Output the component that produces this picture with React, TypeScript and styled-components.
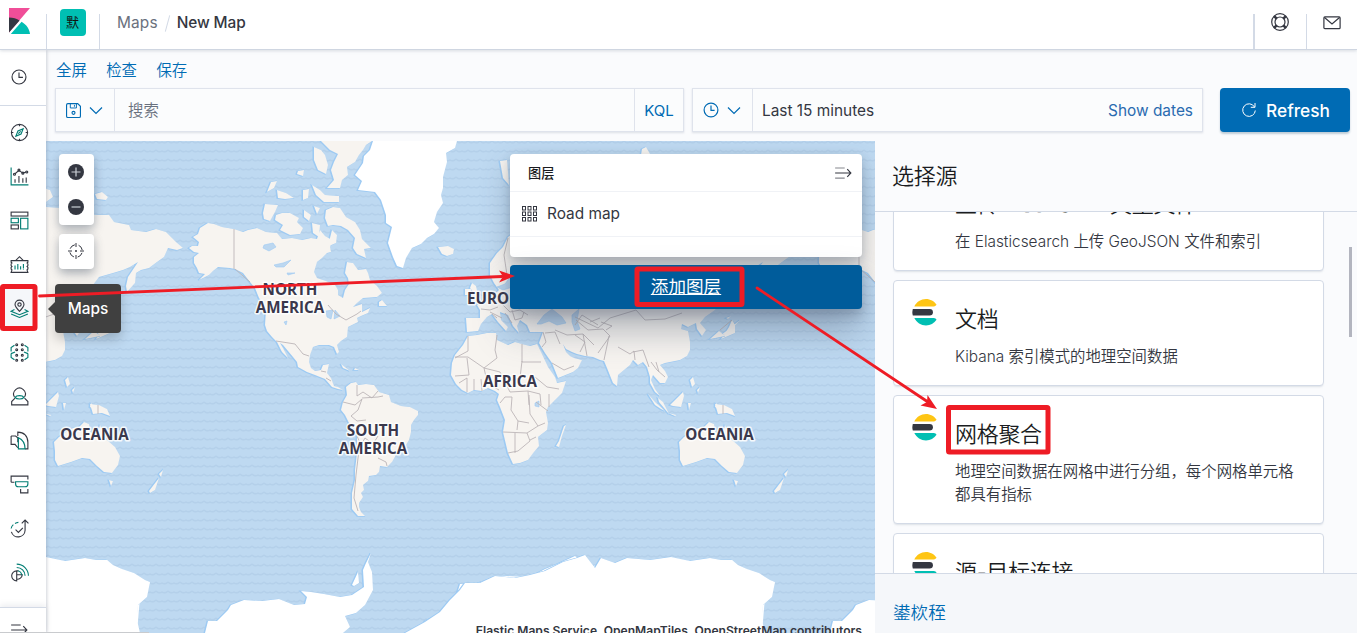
import React from "react";
import styled, { createGlobalStyle, css } from "styled-components";

const INK = "#343741";
const TEAL = "#017d73";
const BLUE = "#006bb4";
const LINE = "#d3dae6";
const RED = "#ee1c25";

const GlobalStyle = createGlobalStyle`
  *, *::before, *::after { box-sizing: border-box; }
  html, body { margin: 0; padding: 0; overflow: hidden; }
  body {
    font-family: Inter, "Noto Sans CJK SC", sans-serif;
    font-size: 15.4px;
    color: ${INK};
    background: #fafbfd;
  }
  button { font: inherit; border: 0; background: none; padding: 0; margin: 0; }
  p, h2, h3, ul { margin: 0; padding: 0; }
`;

const Page = styled.div`
  position: relative;
  width: 1357px;
  height: 633px;
  display: flex;
  flex-direction: column;
  overflow: hidden;
`;

/* ---------- header ---------- */

const Header = styled.header`
  position: relative;
  z-index: 3;
  flex: none;
  height: 50px;
  display: flex;
  align-items: stretch;
  background: #fff;
  border-bottom: 1px solid #cfd6e1;
  box-shadow: 0 1px 3px rgba(152, 162, 179, 0.35);
`;

const HeaderCell = styled.div<{ $w: number; $line?: boolean; $thick?: boolean }>`
  width: ${(p) => p.$w}px;
  display: flex;
  justify-content: center;
  padding-top: 8px;
  ${(p) =>
    p.$line &&
    css`
      background: linear-gradient(${LINE}, ${LINE}) 0 14px / ${p.$thick ? 2 : 1}px 100% no-repeat;
    `}
`;

const SpaceAvatar = styled.span`
  width: 26px;
  height: 27px;
  margin-top: 1px;
  border-radius: 4px;
  background: #00bfb3;
  color: #111;
  font-size: 13px;
  line-height: 26px;
  text-align: center;
`;

const Breadcrumbs = styled.nav`
  flex: 1;
  display: flex;
  align-items: flex-start;
  padding: 12px 0 0 18px;
  line-height: 22px;
  background: linear-gradient(${LINE}, ${LINE}) 0 14px / 1px 100% no-repeat;
`;

const Crumb = styled.span<{ $current?: boolean }>`
  color: ${(p) => (p.$current ? INK : "#6a717d")};
  font-weight: ${(p) => (p.$current ? 500 : 400)};
  letter-spacing: ${(p) => (p.$current ? -0.1 : 0.15)}px;
`;

const CrumbSlash = styled.span`
  width: 1px;
  height: 17px;
  margin: 3px 9px 0 9px;
  background: ${LINE};
  transform: rotate(15deg);
`;

/* ---------- frame ---------- */

const Body = styled.div`
  flex: 1;
  display: flex;
  min-height: 0;
`;

const SideNav = styled.nav`
  position: relative;
  z-index: 2;
  width: 46px;
  flex: none;
  display: flex;
  flex-direction: column;
  background: #fff;
  box-shadow: 1px 0 3px rgba(120, 130, 150, 0.35);
`;

const NavItem = styled.div<{ $active?: boolean }>`
  height: 44px;
  padding-left: 10px;
  display: flex;
  align-items: center;
  background: ${(p) => (p.$active ? "linear-gradient(90deg, #f5f7fa 34px, transparent 34px)" : "transparent")};
`;

const NavRecent = styled.div`
  height: 56px;
  padding: 0 0 2px 10px;
  display: flex;
  align-items: center;
  border-bottom: 1px solid ${LINE};
`;

const NavList = styled.div`
  padding-top: 4px;
  flex: 1;
`;

const NavExpand = styled.div`
  height: 26px;
  padding: 13px 0 0 10px;
  border-top: 1px solid ${LINE};
  box-shadow: 0 -2px 6px rgba(120, 130, 150, 0.15);
  overflow: hidden;
`;

const Main = styled.main`
  flex: 1;
  display: flex;
  flex-direction: column;
  min-width: 0;
  background: #fafbfd;
`;

const TopMenu = styled.div`
  display: flex;
  gap: 19.4px;
  padding: 9px 0 0 10px;
  height: 38px;
  line-height: 24px;
  color: ${BLUE};
  font-weight: 350;
`;

const QueryRow = styled.div`
  display: flex;
  padding-left: 9px;
  height: 53px;
`;

const Field = styled.div<{ $w: number; $gap?: number }>`
  width: ${(p) => p.$w}px;
  height: 44px;
  margin-left: ${(p) => p.$gap ?? 0}px;
  display: flex;
  align-items: stretch;
  border: 1px solid #dfe3ec;
  background: #fbfcfd;
  box-shadow: 0 1px 2px rgba(152, 162, 179, 0.3);
`;

const FieldAddon = styled.div<{ $w: number; $side: "left" | "right" }>`
  width: ${(p) => p.$w}px;
  display: flex;
  align-items: center;
  justify-content: center;
  gap: 7px;
  color: ${BLUE};
  font-size: 15px;
  border-${(p) => (p.$side === "left" ? "right" : "left")}: 1px solid #dfe3ec;
`;

const FieldText = styled.span<{ $muted?: boolean }>`
  flex: 1;
  padding-left: ${(p) => (p.$muted ? 13 : 9)}px;
  line-height: 43px;
  color: ${(p) => (p.$muted ? "#69707d" : INK)};
  font-weight: ${(p) => (p.$muted ? 350 : 400)};
`;

const ShowDates = styled.span`
  line-height: 43px;
  padding-right: 9px;
  color: #2a6bb0;
`;

const RefreshButton = styled.button`
  width: 130px;
  height: 44px;
  margin-left: 17px;
  padding-left: 1px;
  display: flex;
  align-items: center;
  justify-content: center;
  gap: 9px;
  border-radius: 4px;
  background: ${BLUE};
  color: #fff;
  font-size: 17.3px;
  font-weight: 500;
  box-shadow: 0 2px 2px rgba(54, 97, 126, 0.3);
`;

const Workspace = styled.div`
  flex: 1;
  display: flex;
  min-height: 0;
`;

/* ---------- map ---------- */

const MapArea = styled.section`
  position: relative;
  width: 829px;
  flex: none;
  overflow: hidden;
  svg.chart { display: block; }
`;

const MapControls = styled.div`
  position: absolute;
  left: 13px;
  top: 13px;
  display: flex;
  flex-direction: column;
  gap: 9px;
`;

const ControlBox = styled.div`
  width: 35px;
  display: flex;
  flex-direction: column;
  background: #fff;
  border-radius: 4px;
  box-shadow: 0 6px 12px -1px rgba(65, 78, 101, 0.25), 0 3px 8px rgba(65, 78, 101, 0.25);
  svg { display: block; }
`;

const ControlButton = styled.button<{ $h: number }>`
  height: ${(p) => p.$h}px;
  padding: 0 1px 1px 0;
  display: flex;
  align-items: center;
  justify-content: center;
`;

const LayerWidget = styled.div`
  position: absolute;
  left: 464px;
  top: 13px;
  width: 352px;
  display: flex;
  flex-direction: column;
  gap: 8px;
`;

const LayerPanel = styled.div`
  height: 103px;
  background: #fff;
  border-radius: 4px;
  box-shadow: 0 14px 30px rgba(65, 78, 101, 0.3), 0 4px 10px rgba(65, 78, 101, 0.25);
`;

const LayerHeader = styled.div`
  height: 38px;
  padding: 0 10px 0 18px;
  display: flex;
  align-items: center;
  justify-content: space-between;
  border-bottom: 1px solid #f0f2f6;
  font-size: 13.2px;
  font-weight: 500;
  color: #1a1c21;
`;

const LayerRow = styled.div`
  height: 45px;
  padding: 0 0 1px 12px;
  display: flex;
  align-items: center;
  gap: 10px;
  border-bottom: 1px solid #f0f2f6;
`;

const AddLayer = styled.button`
  position: relative;
  height: 44px;
  padding-bottom: 4px;
  border-radius: 4px;
  background: #005c9b;
  color: #fff;
  font-size: 17.6px;
  text-decoration: underline;
  text-underline-offset: 1px;
  box-shadow: 0 20px 36px rgba(65, 78, 101, 0.4), 0 6px 12px rgba(65, 78, 101, 0.3);
`;

const Attribution = styled.div`
  position: absolute;
  right: 13px;
  top: 482px;
  font-size: 12.1px;
  line-height: 16px;
  font-weight: 600;
  white-space: nowrap;
  color: ${INK};
`;

/* ---------- source flyout ---------- */

const Flyout = styled.aside`
  flex: 1;
  display: flex;
  flex-direction: column;
  min-width: 0;
  background: #fafbfd;
`;

const FlyoutHeader = styled.h2`
  height: 71px;
  padding-left: 17px;
  border-bottom: 1px solid ${LINE};
  font-size: 22px;
  font-weight: 350;
  line-height: 70px;
  letter-spacing: -0.3px;
  color: #1a1c21;
`;

const FlyoutBody = styled.div`
  flex: 1;
  min-height: 0;
  overflow: hidden;
  display: flex;
  justify-content: space-between;
  padding: 0 5px 0 18px;
`;

const CardList = styled.div`
  width: 431px;
  margin-top: -47px;
  display: flex;
  flex-direction: column;
  gap: 9px;
`;

const Card = styled.article`
  flex: none;
  display: flex;
  min-height: 106px;
  padding: 18px 17px 17px 18px;
  border: 1px solid ${LINE};
  border-radius: 4px;
  background: #fff;
  box-shadow: 0 2px 2px -1px rgba(152, 162, 179, 0.3);
`;

const CardIcon = styled.div`
  width: 43px;
  flex: none;
`;

const CardTitle = styled.h3`
  margin-top: 4px;
  font-size: 22px;
  line-height: 33px;
  font-weight: 350;
  letter-spacing: -0.3px;
  color: #1a1c21;
`;

const CardText = styled.p`
  margin-top: 9px;
  line-height: 23.1px;
  font-weight: 350;
`;

const ScrollThumb = styled.div`
  width: 3px;
  height: 90px;
  margin-top: 35px;
  background: #b3b5bf;
`;

const FlyoutFooter = styled.footer`
  height: 60px;
  padding-left: 18px;
  border-top: 1px solid ${LINE};
  background: #f5f7fa;
  color: ${BLUE};
  font-size: 17.6px;
  font-weight: 350;
  line-height: 77px;
`;

/* ---------- overlays ---------- */

const Tooltip = styled.div`
  position: absolute;
  z-index: 4;
  left: 55px;
  top: 284px;
  width: 66px;
  height: 49px;
  border-radius: 4px;
  background: #404040;
  color: #fff;
  font-weight: 500;
  line-height: 50px;
  text-align: center;
  box-shadow: 0 6px 12px rgba(0, 0, 0, 0.2);
  &::before {
    content: "";
    position: absolute;
    left: -7px;
    top: 17px;
    border: 8px solid transparent;
    border-left: 0;
    border-right-color: #404040;
  }
`;

const Markup = styled.svg`
  position: absolute;
  z-index: 5;
  left: 0;
  top: 0;
  pointer-events: none;
`;

const StatusEdge = styled.div`
  position: absolute;
  z-index: 6;
  left: 0;
  bottom: 0;
  width: 149px;
  height: 1px;
  background: #c9cbce;
`;

/* ---------- icons ---------- */

const Icon = ({ children, size = 18, color = INK }: { children: React.ReactNode; size?: number; color?: string }) => (
  <svg width={size} height={size} viewBox="0 0 16 16" fill="none" stroke={color} strokeWidth="1">
    {children}
  </svg>
);

const NavIcon = ({ children }: { children: React.ReactNode }) => (
  <svg width="19" height="19" viewBox="0 0 34 34" fill="none" stroke={INK} strokeWidth="2">
    {children}
  </svg>
);

const KibanaLogo = () => (
  <svg width="21" height="26" viewBox="0 0 21 26">
    <path d="M0 0h21L0 24.500z" fill="#f04e98" />
    <path d="M0 9.500c4 0 7.600 1 10.600 3L0 24.500z" fill="#343741" />
    <path d="M12.600 13.700C17.400 16.500 20.500 21 21 26H1.800z" fill="#00bfb3" />
  </svg>
);

const ElasticLogo = () => (
  <svg width="27" height="27" viewBox="0 0 27 27">
    <path d="M2.300 7.400C4.500 3 9 0 14 0c4.300 0 8.200 2.200 10.500 5.600-.4.900-1.300 1.800-2.700 1.800z" fill="#fec514" />
    <path d="M.8 10h16.800a3.300 3.300 0 0 1 0 6.600H.8a13 13 0 0 1 0-6.600z" fill="#343741" />
    <path d="M2.300 19h19.500c1.300 0 2.200.8 2.700 1.800A13 13 0 0 1 14 26.400C9 26.400 4.500 23.500 2.300 19z" fill="#00bfb3" />
  </svg>
);

const ArrowLines = ({ faded }: { faded?: boolean }) => (
  <Icon>
    <path d="M1 3.500h8.500M1 12.500h8.500" stroke={faded ? "#85878e" : INK} />
    <path d="M1 8h14M11.800 4.600 15 8l-3.200 3.400" />
  </Icon>
);

const ChevronDown = () => (
  <Icon size={16} color={BLUE}>
    <path d="M2 5.500 8 11.500l6-6" strokeWidth="1.200" />
  </Icon>
);

const navIcons: { name: string; art: React.ReactNode }[] = [
  {
    name: "discover",
    art: (
      <>
        <circle cx="17" cy="17" r="14.500" />
        <path d="M17 2v4M17 28v4M2 17h4M28 17h4" />
        <path d="M23.500 10.500 19.800 19.800 10.500 23.500 14.200 14.200zM14.800 19.200l4.400-4.400" stroke={TEAL} />
      </>
    ),
  },
  {
    name: "visualize",
    art: (
      <>
        <path d="M2 1v31h31" stroke={TEAL} />
        <path d="M9 28v-6M16 28V16M23 28v-8M29 28V19" />
        <path d="M9 12 16 6l7 5 6-2" />
        <circle cx="8" cy="13" r="1.800" />
        <circle cx="16" cy="5.500" r="1.800" />
        <circle cx="23" cy="11" r="1.800" />
        <circle cx="30" cy="9" r="1.800" />
      </>
    ),
  },
  {
    name: "dashboard",
    art: (
      <>
        <rect x="2" y="2" width="30" height="7" />
        <rect x="2" y="13" width="13" height="8" stroke={TEAL} />
        <rect x="2" y="25" width="13" height="7" />
        <rect x="19" y="13" width="13" height="19" stroke={TEAL} />
      </>
    ),
  },
  {
    name: "canvas",
    art: (
      <>
        <path d="M2 10h30v3l-1.500 1.500L32 16v3l-1.500 1.500L32 22v3l-1.500 1.500L32 31H2l1.500-4.500L2 25v-3l1.500-1.500L2 19v-3l1.500-1.500L2 13zM10 10l7-7 7 7" />
        <path d="M9 26v-7M14 26V16M19 26v-6M24 24v-8M24 26v1" stroke={TEAL} />
      </>
    ),
  },
  {
    name: "maps",
    art: (
      <>
        <path d="M17 22c-5-5-8-8-8-12a8 8 0 0 1 16 0c0 4-3 7-8 12z" />
        <circle cx="17" cy="10" r="3" />
        <path d="M8 19l-6 3 15 6 15-6-6-3M2 27l15 6 15-6" stroke={TEAL} />
      </>
    ),
  },
  {
    name: "ml",
    art: (
      <>
        <circle cx="12" cy="3" r="1.700" />
        <circle cx="22" cy="3" r="1.700" />
        <circle cx="12" cy="12" r="1.700" />
        <circle cx="22" cy="12" r="1.700" />
        <circle cx="12" cy="22" r="1.700" />
        <circle cx="22" cy="22" r="1.700" />
        <circle cx="12" cy="31" r="1.700" />
        <circle cx="22" cy="31" r="1.700" />
        <path d="M8 4 2 8v7M8 30l-6-4v-7M2 19l7-3M26 4l6 4v7M26 30l6-4v-7M32 19l-7-3" stroke={TEAL} />
      </>
    ),
  },
  {
    name: "infra",
    art: (
      <>
        <path d="M8 18a10.500 10.500 0 1 1 18 0M9 20 3 26v6h29v-6l-6-6" />
        <path d="M9 18.500c3-4 13-4 16 0-3 4-13 4-16 0z" stroke={TEAL} />
      </>
    ),
  },
  {
    name: "logs",
    art: (
      <>
        <path d="M2 9h8l4 3v8M14 30 9 24H2V9M14 9V2c11 0 18 7 18 18v12h-5" />
        <path d="M15 12v20h12c0-10-5-17-12-20z" stroke={TEAL} />
      </>
    ),
  },
  {
    name: "apm",
    art: (
      <>
        <path d="M2 13V2h30v6M2 13h6M19 25v7h13V25" />
        <path d="M10 12h22v4a5 5 0 0 1-5 5H15a5 5 0 0 1-5-5z" stroke={TEAL} />
      </>
    ),
  },
  {
    name: "uptime",
    art: (
      <>
        <path d="M27 3v17a12.500 12.500 0 0 1-24.500 3M21 8l6-6 6 6M10 19l5 5 8-8" />
        <path d="M2 17a12 12 0 0 1 4-7M9 8a13 13 0 0 1 6-2" stroke={TEAL} />
      </>
    ),
  },
  {
    name: "siem",
    art: (
      <>
        <path d="M12 14v18a9 9 0 1 1 0-18h3M12 21h10a9 9 0 0 1-10 8" />
        <path d="M12 2a21 21 0 0 1 21 21M12 8a15 15 0 0 1 15 15M14 14a9 9 0 0 1 7 8" stroke={TEAL} />
      </>
    ),
  },
];

/* ---------- map geometry ---------- */

const northAmerica =
  "M208 223 214 224 222 227 234 229 243 232 248 230 257 228 266 232 277 233 282 239 292 238 302 240 311 238 317 239 320 230 325 236 332 240 330 247 331 252 327 253 322 258 317 262 314 272 317 278 326 281 335 285 338 290 338 295 343 298 345 290 349 284 348 278 345 273 347 262 353 263 358 270 366 269 368 273 370 280 377 286 382 293 377 297 363 298 357 303 353 307 362 304 362 312 370 308 368 313 361 316 357 318 358 322 348 327 347 337 341 341 337 345 339 352 337 354 334 347 329 345 319 345 313 347 310 355 309 362 311 368 315 371 321 370 323 365 329 364 327 373 331 378 334 386 338 387 343 390 338 389 332 387 325 379 315 375 307 372 298 367 297 362 293 357 288 351 283 345 280 343 284 350 288 358 282 352 277 342 272 337 267 331 265 325 266 310 263 303 259 298 255 288 250 282 243 273 235 269 230 268 218 267 213 271 209 275 199 280 205 274 199 273 197 268 194 263 194 257 199 253 194 252 189 248 192 246 198 246 199 242 193 237 198 234 200 228z";
const southAmerica =
  "M346 387 351 383 356 382 358 385 366 384 374 385 379 392 389 395 391 402 401 406 410 407 418 411 418 415 414 420 411 425 411 432 409 440 403 450 396 455 392 462 387 467 380 466 379 472 376 475 369 476 368 481 363 485 364 490 361 493 363 497 359 503 359 507 361 512 365 516 358 516 352 509 352 493 355 480 355 470 357 453 357 435 354 428 349 423 345 415 341 410 343 402 347 395z";
const ellesmere =
  "M321 141 330 150 338 154 334 162 331 170 334 180 327 188 340 188 342 180 348 175 347 167 355 162 359 155 363 150 366 145 372 141zM314 147 321 150 325 155 328 165 326 174 318 170 314 160zM312 185 320 190 325 195 339 196 339 202 324 202 316 195zM303 190 309 189 308 198 303 200zM265 204 278 205 275 212 270 221 264 219 263 213zM276 215 282 213 290 213 299 218 297 222 303 228 300 234 290 235 280 230 283 225 275 220zM326 210 333 207 340 208 346 217 355 222 360 230 362 239 371 248 364 249 366 258 357 254 353 248 355 238 348 230 341 226 333 225 328 226 325 218zM271 182 277 181 274 188 267 192zM277 190 286 193 294 198 285 199 278 198zM298 171 304 170 303 176 297 174zM304 210 311 215 309 221 304 217zM314 206 320 208 317 214zM312 223 320 225 319 237 313 233zM332 230 337 235 336 243 329 246 330 238zM379 302 382 300 387 306 379 306z";
const greenland =
  "M373 141 370 150 364 156 363 163 355 175 362 181 358 190 375 192 381 200 386 215 386 223 392 227 388 243 393 257 397 266 403 268 406 258 412 248 421 244 427 238 434 234 439 228 434 222 437 212 443 203 441 195 443 188 443 177 447 162 446 153 455 148 457 141z";
const africa =
  "M468 336 477 335 487 333 496 333 497 340 508 345 515 342 522 344 530 346 537 344 541 352 548 367 555 377 557 383 566 381 562 393 555 400 548 407 546 412 548 423 547 430 538 437 539 446 534 452 528 460 520 463 513 464 508 453 503 432 505 420 500 407 497 400 499 394 495 391 488 388 482 391 474 390 468 393 462 390 456 384 451 375 452 363 455 355 463 345z";
const eurasia =
  "M477 305 486 301 492 296 497 292 499 290 494 283 490 275 490 263 497 253 503 247 508 237 520 228 535 222 560 235 600 215 640 198 671 207 690 208 721 215 734 215 739 222 754 225 756 230 771 232 781 229 791 232 797 238 801 242 808 248 802 250 793 248 789 257 782 262 774 268 766 270 761 273 760 283 752 292 751 286 753 277 763 262 755 267 748 270 738 273 724 277 718 285 721 295 721 303 715 310 705 317 700 323 706 330 702 336 697 329 696 323 688 327 682 324 681 329 688 331 690 342 690 350 687 356 680 360 670 362 665 363 660 365 665 371 668 377 665 383 660 383 653 375 651 380 655 389 660 396 655 392 650 383 650 377 647 367 643 362 638 365 633 360 630 365 618 375 617 386 613 383 607 368 604 361 600 360 593 357 585 356 577 354 572 352 566 349 563 344 566 352 570 356 574 358 582 360 578 368 573 372 558 378 552 363 545 353 539 343 543 332 530 332 527 325 520 320 517 326 519 333 513 326 508 315 500 312 501 320 508 327 506 331 498 322 492 314 487 317 481 324 478 331 467 332 466 318 480 318 480 310z";
const islands =
  "M472 283 476 286 478 295 481 300 474 302 475 294 470 288zM465 289 471 289 470 295 465 295zM438 247 448 246 454 249 453 254 447 256 442 254zM500 161 507 160 509 185 503 178zM559 441 564 426 566 425 562 436 559 447 556 446zM716 403 722 411 719 409 715 407zM658 398 663 402 669 414 659 402zM648 394 655 402 665 411 661 409 655 405zM668 413 677 415 675 416zM670 405 683 392 684 396 681 407 673 406zM688 403 691 403 689 410zM734 480 738 481 736 486zM740 320 729 332 717 338 725 332zM726 318 731 316 728 319zM94 331 100 336 85 339zM720 194 727 192 733 197 731 200 722 199zM669 188 675 190 678 197 671 202zM642 149 646 147 650 154 641 155zM695 197 702 192 712 197 706 201zM735 333 721 339 724 335 729 327 732 320 735 325zM343 368 350 371 341 364zM355 368 359 370 354 370zM690 380 693 377 695 384 692 387zM697 390 700 387 698 393z";
const oceania =
  "M679 442 684 437 691 432 698 428 704 427 709 422 714 424 715 432 722 436 725 425 728 432 731 439 740 447 745 456 743 465 737 473 729 472 722 466 715 459 707 458 696 462 683 466 680 460 680 451zM715 404 724 405 732 409 735 416 727 413 718 414zM774 491 784 478 780 490 775 493zM784 474 788 470 786 477z";
const antarctica =
  "M150 582 145 580 134 573 122 569 113 565 107 560 96 560 85 558 65 561 46 557 25 560 2 558-10 563-24 558-30 568-40 555-48 558-62 562-80 571-95 575-110 578-130 576-145 583-160 583-165 590-175 600-185 612-200 622-220 633 140 633 137 620 138 605 147 597zM205 633 208 621 217 621 228 610 231 605 244 600 262 601 279 599 294 605 305 604 307 597 301 591 311 592 324 594 340 597 352 595 364 587 363 570 366 563 371 553 368 562 372 572 373 590 365 605 356 613 345 616 350 627 343 633zM352 585 358 572 359 583 354 586zM420 633 425 621 440 614 455 600 460 584 478 583 495 577 506 576 530 577 545 569 555 565 575 556 588 567 597 565 598 583 604 585 611 573 625 561 650 561 671 557 690 561 732 560 738 567 750 570 775 583 765 597 762 633z";
const borders =
  "M234 229V269M235 269 243 276 250 282M276 341 295 344 303 354 309 356M328 305 336 314 346 320 357 314 361 311M321 371 326 372M326 378 331 381M357 385 357 396 363 392 372 398 378 391M343 402 355 405 362 399 358 410 351 416 357 421 366 420M362 398 378 397 383 396M357 436 361 445 365 438 373 444 378 436M378 458 386 462 387 466M359 450 356 475 354 498 358 511M455 357 468 357 484 368 497 358 495 350 497 335M468 336 468 351 455 358M522 344V362H541M522 361 520 378 505 382 500 372 484 368 486 377M467 358 469 375 455 376M486 377 492 386 499 390M505 382 510 392 528 391 540 394M535 377 547 387 559 389M505 397 512 397 511 410 518 421 529 423M529 395 530 414 538 426 545 423M503 432 527 433 530 441 518 451M515 433V453M508 453 518 451M527 433 538 426M530 440 536 437M549 394V407M459 383 467 378 467 392M474 379V390M481 379 482 391M543 332 546 342 542 347M552 363 564 370 574 366M545 333 555 332 560 344M555 330 567 335 583 334 587 356M576 320 588 330 603 329 610 336 598 353M609 336 604 360M583 334 594 345M575 317 598 328 610 318 636 310M636 310 645 320 665 319 682 313M618 347 630 354 634 351 635 360M633 352 643 350 649 367M651 362 657 370 665 377M656 362 659 372M575 325 582 315 598 325M500 302 510 312 520 310 528 315M481 309 490 310 498 307M490 312 502 318M508 238 504 255 507 275M723 405V414M732 320 720 330M512 310 515 320 522 318 524 312M505 313 512 323M497 318 492 314M528 391 529 405M536 402 548 411M505 397 500 403M518 421 517 430M601 322 612 326 606 330M590 322 600 318M575 335 585 342 580 352M540 394 541 405";

const World = ({ dx }: { dx: number }) => (
  <g transform={`translate(${dx} 0)`}>
    <g fill="#9dcaf3" stroke="#9dcaf3" strokeWidth="1.100" transform="translate(-1 0.200)">
      <path d={northAmerica} />
      <path d={southAmerica} />
      <path d={ellesmere} />
      <path d={greenland} />
      <path d={africa} />
      <path d={eurasia} />
      <path d={islands} />
      <path d={oceania} />
      <path d={antarctica} />
    </g>
    <g fill="#f7f4f0">
      <path d={northAmerica} />
      <path d={southAmerica} />
      <path d={ellesmere} />
      <path d={africa} />
      <path d={eurasia} />
      <path d={islands} />
      <path d={oceania} />
    </g>
    <path d={greenland} fill="#fff" />
    <path d={antarctica} fill="#fff" />
    <path
      d="M264 245 273 243 276 247 269 251 263 248zM274 265 283 263 291 260 284 267 276 267zM287 273 295 273 288 275zM326 311 333 310 331 319 327 317zM335 310 340 316 334 319zM537 324 544 315 552 309 562 317 566 323 557 325 549 321 541 324zM572 315 579 309 577 321 580 329 575 331 572 322zM535 403 539 401 539 407 535 406zM497 287 503 290 516 286 515 275 510 277 505 284zM284 322 287 321 286 325z"
      fill="#bcd7f0"
      stroke="#9dcaf3"
      strokeWidth="0.600"
    />
    <path d={borders} fill="none" stroke="#bcb5b8" strokeWidth="0.900" />
  </g>
);

const MapLabel = styled.text`
  font-family: "Open Sans", "Noto Sans", sans-serif;
  font-weight: 700;
  font-size: 15.2px;
  fill: #3a384c;
  stroke: rgba(255, 255, 255, 0.85);
  stroke-width: 3px;
  stroke-linejoin: round;
  paint-order: stroke;
  text-anchor: middle;
`;

const WorldMap = () => (
  <svg className="chart" width="829" height="492" viewBox="46 141 829 492">
    <defs>
      <pattern id="waves" width="12" height="9" patternUnits="userSpaceOnUse" patternTransform="translate(0 3)">
        <rect width="12" height="9" fill="#bed9f1" />
        <path d="M0 3q3 3 6 1q3 2 6-1" fill="none" stroke="#b4d0ea" strokeWidth="1.500" />
      </pattern>
    </defs>
    <rect x="46" y="141" width="829" height="492" fill="url(#waves)" />
    <World dx={-625} />
    <World dx={0} />
    <World dx={625} />
    <MapLabel x="290" y="294.500">NORTH</MapLabel>
    <MapLabel x="290" y="313">AMERICA</MapLabel>
    <MapLabel x="373" y="435.500">SOUTH</MapLabel>
    <MapLabel x="373" y="454">AMERICA</MapLabel>
    <MapLabel x="94.500" y="439.500">OCEANIA</MapLabel>
    <MapLabel x="719.500" y="439.500">OCEANIA</MapLabel>
    <MapLabel x="510" y="387">AFRICA</MapLabel>
    <MapLabel x="497" y="304">EUROPE</MapLabel>
  </svg>
);

const sources = [
  { title: "上传 GeoJSON 矢量文件", text: "在 Elasticsearch 上传 GeoJSON 文件和索引", logo: false },
  { title: "文档", text: "Kibana 索引模式的地理空间数据", logo: true },
  { title: "网格聚合", text: "地理空间数据在网格中进行分组，每个网格单元格都具有指标", logo: true },
  { title: "源-目标连接", text: "", logo: true },
];

export default function App() {
  return (
    <Page>
      <GlobalStyle />
      <Header>
        <HeaderCell $w={39}>
          <KibanaLogo />
        </HeaderCell>
        <HeaderCell $w={7} />
        <HeaderCell $w={53} $line>
          <SpaceAvatar>默</SpaceAvatar>
        </HeaderCell>
        <Breadcrumbs>
          <Crumb>Maps</Crumb>
          <CrumbSlash />
          <Crumb $current>New Map</Crumb>
        </Breadcrumbs>
        <HeaderCell $w={53} $line $thick>
          <svg width="20" height="28" viewBox="0 0 20 28" fill="none" stroke={INK} strokeWidth="1.200">
            <circle cx="10" cy="14" r="8.300" />
            <circle cx="10" cy="14" r="5" />
            <path d="m4.200 8.200 2.400 2.400M15.800 8.200l-2.400 2.400M4.200 19.800l2.400-2.400M15.800 19.800l-2.400-2.400" strokeWidth="2.600" />
          </svg>
        </HeaderCell>
        <HeaderCell $w={51} $line>
          <svg width="18" height="28" viewBox="0 0 18 28" fill="none" stroke={INK} strokeWidth="1.200">
            <rect x="0.900" y="8.900" width="16.200" height="11.800" rx="1" />
            <path d="m1.500 9.500 7.500 6.500 7.500-6.500" />
          </svg>
        </HeaderCell>
      </Header>

      <Body>
        <SideNav>
          <NavRecent>
            <Icon>
              <circle cx="8" cy="8" r="6.200" />
              <path d="M8 4v4.300h3.500" />
            </Icon>
          </NavRecent>
          <NavList>
            {navIcons.map((item) => (
              <NavItem key={item.name} $active={item.name === "maps"}>
                <NavIcon>{item.art}</NavIcon>
              </NavItem>
            ))}
          </NavList>
          <NavExpand>
            <ArrowLines />
          </NavExpand>
        </SideNav>

        <Main>
          <TopMenu>
            <span>全屏</span>
            <span>检查</span>
            <span>保存</span>
          </TopMenu>
          <QueryRow>
            <Field $w={629}>
              <FieldAddon $w={59} $side="left">
                <Icon size={15} color={BLUE}>
                  <path d="M.6 2q0-1.400 1.400-1.400h10.500l2.900 2.900V14q0 1.400-1.400 1.400H2Q.6 15.400.6 14z" strokeWidth="1.200" />
                  <path d="M4.600.8v4.500h6.500V.8M9 2v2" />
                  <circle cx="8" cy="10.500" r="1.600" strokeWidth="1.200" />
                </Icon>
                <ChevronDown />
              </FieldAddon>
              <FieldText $muted>搜索</FieldText>
              <FieldAddon $w={49} $side="right">
                KQL
              </FieldAddon>
            </Field>
            <Field $w={511} $gap={8}>
              <FieldAddon $w={60} $side="left">
                <Icon size={16} color={BLUE}>
                  <circle cx="8" cy="8" r="6.900" strokeWidth="1.200" />
                  <path d="M8 3.500v4.800h3.600" strokeWidth="1.200" />
                </Icon>
                <ChevronDown />
              </FieldAddon>
              <FieldText>Last 15 minutes</FieldText>
              <ShowDates>Show dates</ShowDates>
            </Field>
            <RefreshButton>
              <Icon size={16} color="#fff">
                <path d="M13.500 5A6.300 6.300 0 1 0 14.300 8.500M14 1v4.300H9.800" />
              </Icon>
              Refresh
            </RefreshButton>
          </QueryRow>

          <Workspace>
            <MapArea>
              <WorldMap />
              <MapControls>
                <ControlBox>
                  <ControlButton $h={36}>
                    <svg width="16" height="16" viewBox="0 0 16 16">
                      <circle cx="8" cy="8" r="8" fill={INK} />
                      <path d="M3.500 8h9M8 3.500v9" stroke="#ccd0d6" strokeWidth="1.200" />
                    </svg>
                  </ControlButton>
                  <ControlButton $h={35}>
                    <svg width="16" height="16" viewBox="0 0 16 16">
                      <circle cx="8" cy="8" r="8" fill={INK} />
                      <path d="M3.500 8h9" stroke="#ccd0d6" strokeWidth="1.200" />
                    </svg>
                  </ControlButton>
                </ControlBox>
                <ControlBox>
                  <ControlButton $h={35}>
                    <Icon size={16}>
                      <circle cx="8" cy="8" r="6.300" strokeDasharray="6 3.900" strokeDashoffset="-1.900" />
                      <path d="M8 0v4M8 12v4M0 8h4M12 8h4" />
                      <circle cx="8" cy="8" r="1" fill={INK} stroke="none" />
                    </Icon>
                  </ControlButton>
                </ControlBox>
              </MapControls>
              <LayerWidget>
                <LayerPanel>
                  <LayerHeader>
                    图层
                    <ArrowLines faded />
                  </LayerHeader>
                  <LayerRow>
                    <svg width="15" height="16" viewBox="0 0 15 16" fill="none" stroke={INK} strokeWidth="1">
                      {[0.5, 6, 11.5].map((y) =>
                        [0.5, 6, 11.5].map((x) => <rect key={`${x}-${y}`} x={x} y={y} width="3" height="3.500" />)
                      )}
                    </svg>
                    Road map
                  </LayerRow>
                </LayerPanel>
                <AddLayer>添加图层</AddLayer>
              </LayerWidget>
              <Attribution>Elastic Maps Service, OpenMapTiles, OpenStreetMap contributors</Attribution>
            </MapArea>

            <Flyout>
              <FlyoutHeader>选择源</FlyoutHeader>
              <FlyoutBody>
                <CardList>
                  {sources.map((s) => (
                    <Card key={s.title}>
                      <CardIcon>{s.logo && <ElasticLogo />}</CardIcon>
                      <div>
                        <CardTitle>{s.title}</CardTitle>
                        {s.text && <CardText>{s.text}</CardText>}
                      </div>
                    </Card>
                  ))}
                </CardList>
                <ScrollThumb />
              </FlyoutBody>
              <FlyoutFooter>鍙栨秷</FlyoutFooter>
            </Flyout>
          </Workspace>
        </Main>
      </Body>

      <Tooltip>Maps</Tooltip>
      <Markup width="1357" height="633" viewBox="0 0 1357 633" fill="none" stroke={RED}>
        <rect x="2.500" y="286.500" width="32.500" height="42" strokeWidth="5" rx="1" />
        <rect x="637" y="269" width="105" height="35.500" strokeWidth="5" rx="1" />
        <rect x="948.500" y="407.500" width="99.500" height="44.500" strokeWidth="5" rx="1" />
        <path d="M39.500 296 502 276.500" strokeWidth="2.800" strokeLinecap="round" />
        <path d="M515 276 499 282.500 503 276.500 499 270.500z" fill={RED} stroke="none" />
        <path d="M757 288 928 402" strokeWidth="2.800" strokeLinecap="round" />
        <path d="M937 409 920.500 405.500 927 402 927.500 395z" fill={RED} stroke="none" />
      </Markup>
      <StatusEdge />
    </Page>
  );
}
